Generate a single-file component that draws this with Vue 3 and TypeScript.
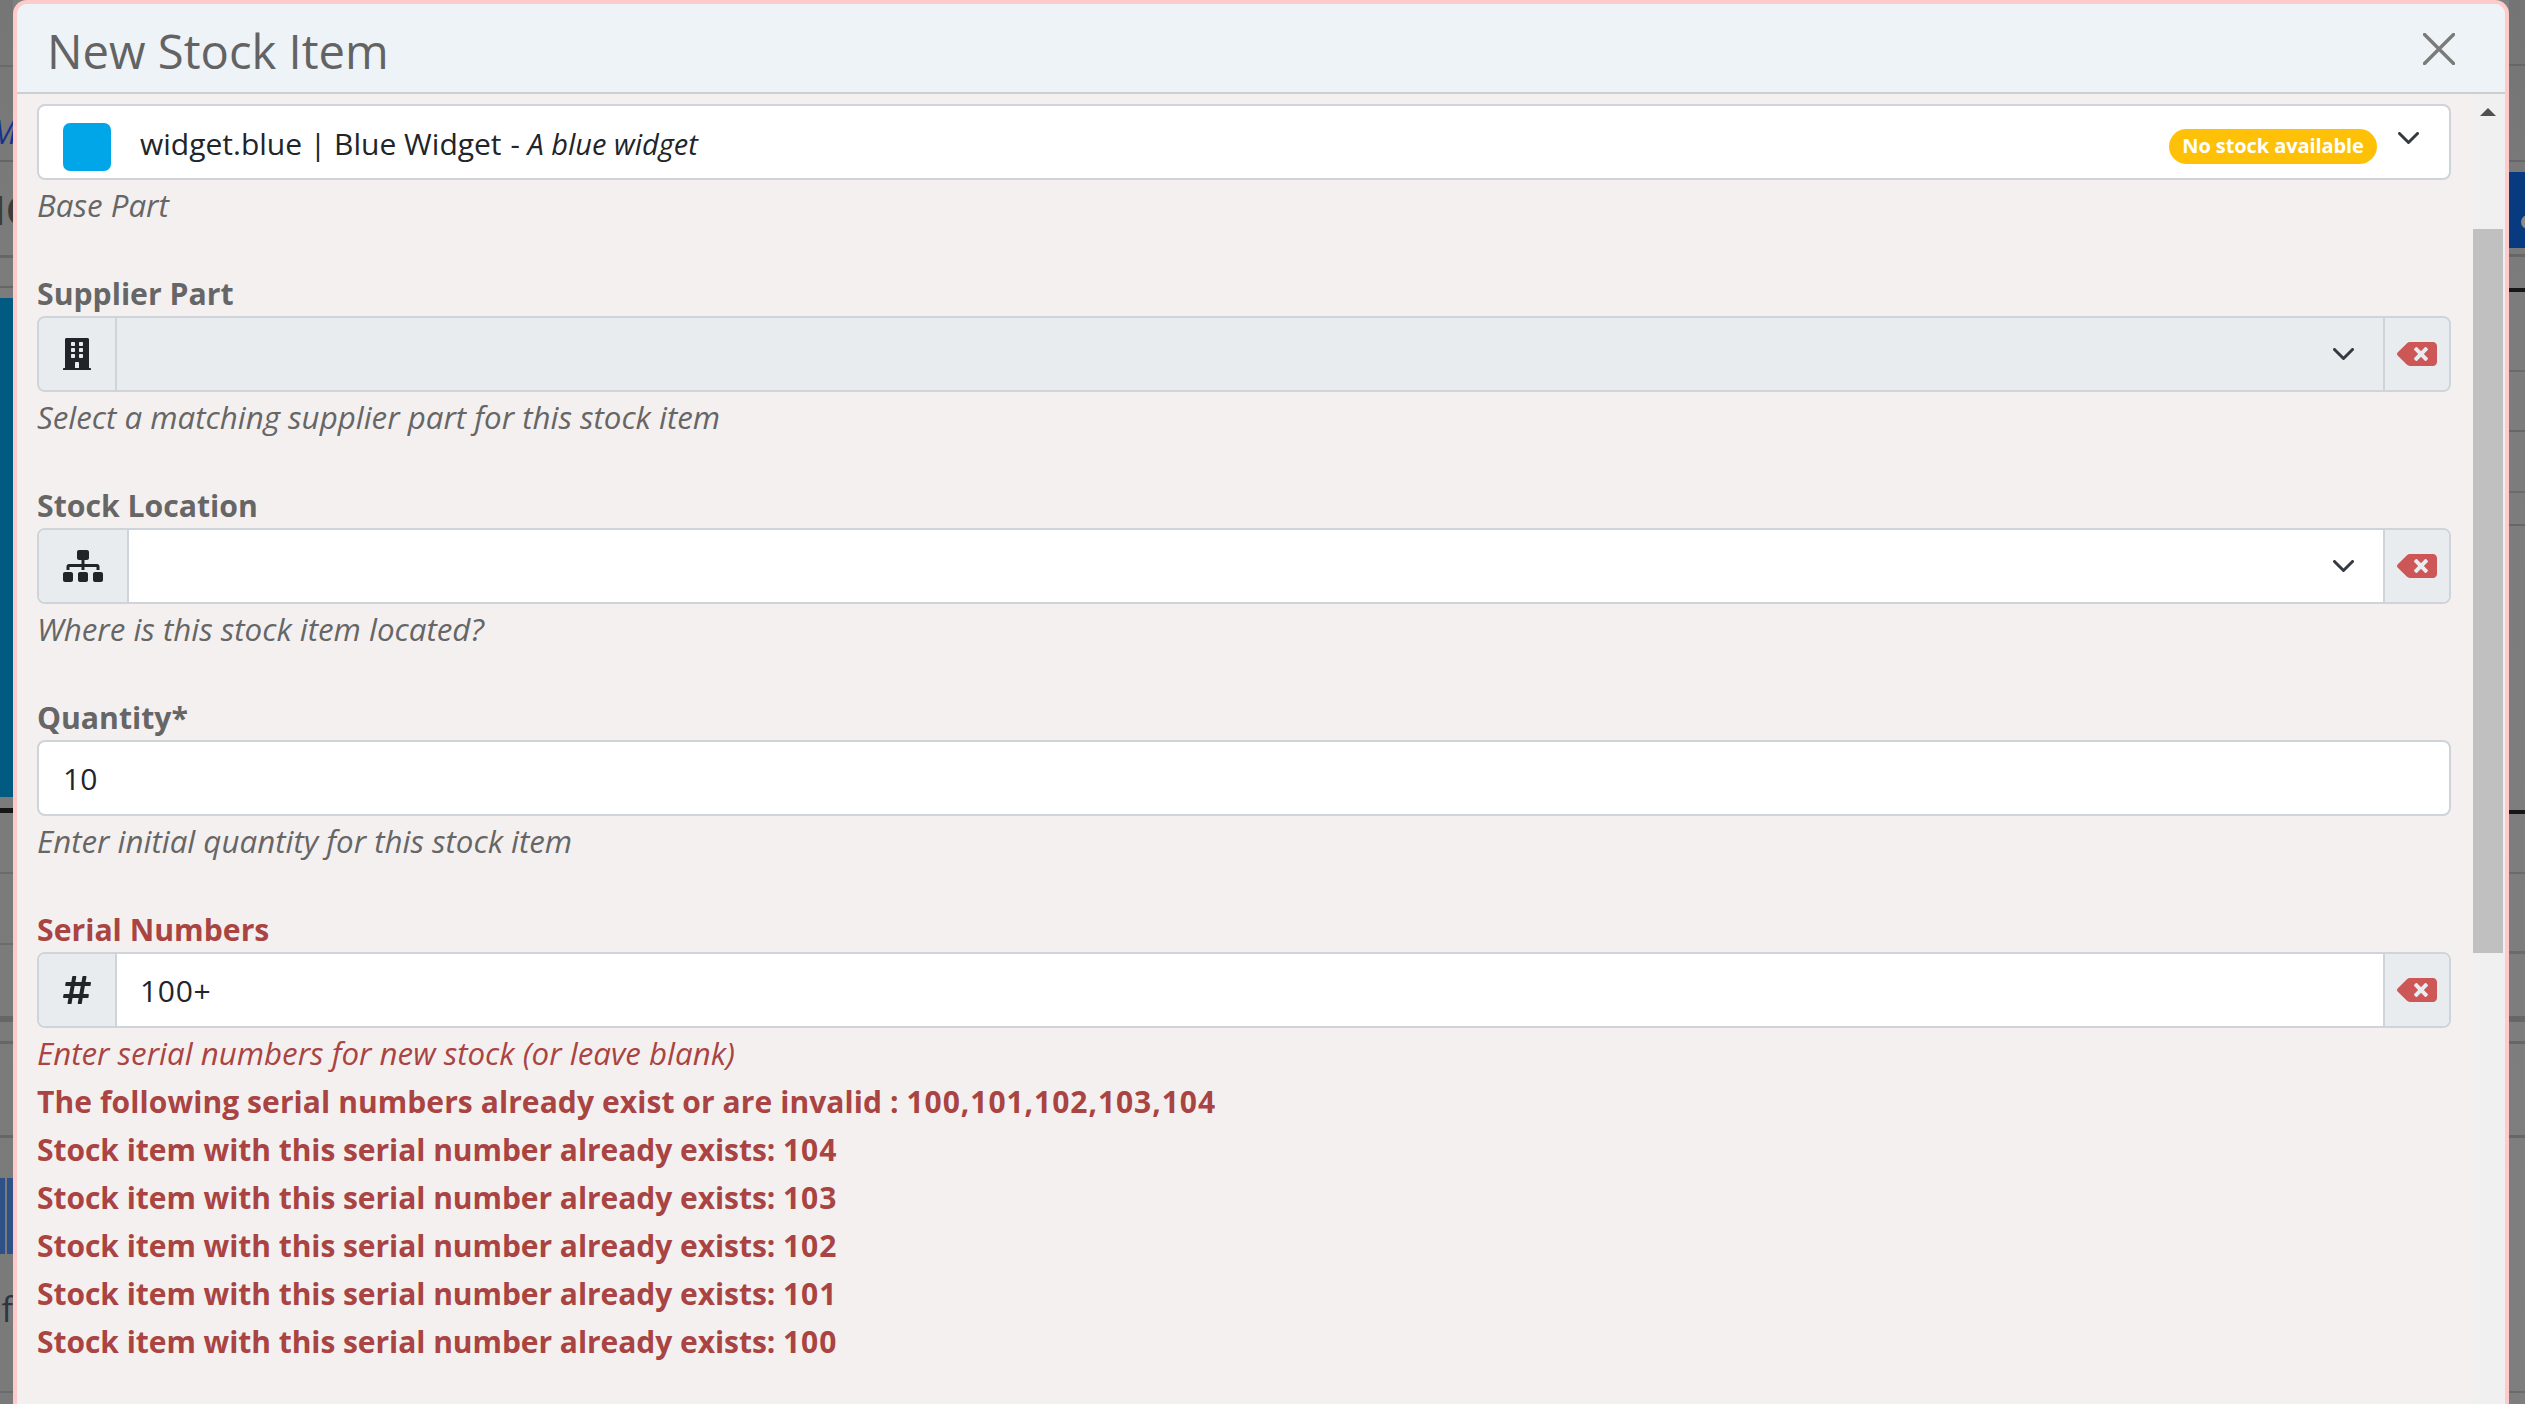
<script setup lang="ts">
interface Mark { y: number; h: number; c: string }
interface SerialError { text: string; nums: string; wide: boolean }
const leftMarks: Mark[] = [
  { y: 65, h: 2, c: '#6a6a6a' }, { y: 160, h: 2, c: '#656565' }, { y: 255, h: 3, c: '#666666' }, { y: 286, h: 2, c: '#666666' },
  { y: 298, h: 499, c: '#005a82' }, { y: 808, h: 5, c: '#161616' }, { y: 872, h: 2, c: '#6b6b6b' }, { y: 943, h: 2, c: '#6b6b6b' },
  { y: 1016, h: 6, c: '#666666' }, { y: 1041, h: 3, c: '#666666' }, { y: 1135, h: 3, c: '#666666' }, { y: 1391, h: 2, c: '#6b6b6b' },
]
const rightMarks: Mark[] = [
  { y: 64, h: 2, c: '#666666' }, { y: 160, h: 2, c: '#666666' }, { y: 172, h: 76, c: '#083a80' }, { y: 254, h: 3, c: '#666666' },
  { y: 288, h: 4, c: '#161616' }, { y: 370, h: 2, c: '#6b6b6b' }, { y: 430, h: 2, c: '#666666' }, { y: 491, h: 2, c: '#6b6b6b' },
  { y: 524, h: 2, c: '#666666' }, { y: 810, h: 4, c: '#161616' }, { y: 872, h: 2, c: '#6b6b6b' }, { y: 951, h: 3, c: '#6b6b6b' },
  { y: 1016, h: 6, c: '#666666' }, { y: 1041, h: 3, c: '#666666' }, { y: 1135, h: 3, c: '#666666' }, { y: 1391, h: 2, c: '#6b6b6b' },
]
const existing = 'Stock item with this serial number already exists: '
const serialErrors: SerialError[] = [
  { text: 'The following serial numbers already exist or are invalid : ', nums: '100,101,102,103,104', wide: true },
  { text: existing, nums: '104', wide: false },
  { text: existing, nums: '103', wide: false },
  { text: existing, nums: '102', wide: false },
  { text: existing, nums: '101', wide: false },
  { text: existing, nums: '100', wide: false },
]
const backspace = 'M576 64H205.26A63.97 63.97 0 0 0 160 82.75L9.37 233.37c-12.5 12.5-12.5 32.76 0 45.25L160 429.25c12 12 28.28 18.75 45.25 18.75H576c35.35 0 64-28.65 64-64V128c0-35.35-28.65-64-64-64zm-84.69 254.06c6.25 6.25 6.25 16.38 0 22.63l-22.62 22.62c-6.25 6.25-16.38 6.25-22.63 0L384 301.25l-62.06 62.06c-6.25 6.25-16.38 6.25-22.63 0l-22.62-22.62c-6.25-6.25-6.25-16.38 0-22.63L338.75 256l-62.06-62.06c-6.25-6.25-6.25-16.38 0-22.63l22.62-22.62c6.25-6.25 16.38-6.25 22.63 0L384 210.75l62.06-62.06c6.25-6.25 16.38-6.25 22.63 0l22.62 22.62c6.25 6.25 6.25 16.38 0 22.63L429.25 256l62.06 62.06z'
</script>

<template>
  <div class="page">
    <div class="strip strip-left">
      <i v-for="m in leftMarks" :key="m.y" class="mark" :style="{ top: m.y + 'px', height: m.h + 'px', background: m.c }"></i>
      <i class="block b1"></i><i class="block b2"></i>
      <span class="bg-text t-m">M</span>
      <span class="bg-text t-ic">IC</span>
      <span class="bg-text t-of">of</span>
    </div>
    <div class="strip strip-right">
      <i v-for="m in rightMarks" :key="m.y" class="mark" :style="{ top: m.y + 'px', height: m.h + 'px', background: m.c }"></i>
      <i class="blob"></i>
    </div>

    <div class="modal">
      <header class="modal-header">
        <h3 class="title">New Stock Item</h3>
        <svg class="close" viewBox="0 0 32 32" aria-label="Close"><path d="M1.5 1.5l29 29M30.5 1.5l-29 29" /></svg>
      </header>
      <div class="modal-body">
        <form class="form">
          <section class="field first">
            <div class="control part-select">
              <span class="swatch"></span>
              <span class="part-name">widget.blue | Blue Widget</span>
              <span class="part-desc">- <em>A blue widget</em></span>
              <span class="badge">No stock available</span>
              <svg class="chev chev-part" viewBox="0 0 21 12"><path d="M1.5 1.5L10.5 10.5 19.5 1.5" /></svg>
            </div>
            <p class="help">Base Part</p>
          </section>

          <section class="field">
            <label class="label">Supplier Part</label>
            <div class="control disabled">
              <span class="addon addon-narrow">
                <svg class="ico-building" viewBox="0 0 448 512"><path d="M436 480h-20V24c0-13.255-10.745-24-24-24H56C42.745 0 32 10.745 32 24v456H12c-6.627 0-12 5.373-12 12v20h448v-20c0-6.627-5.373-12-12-12zM128 76c0-6.627 5.373-12 12-12h40c6.627 0 12 5.373 12 12v40c0 6.627-5.373 12-12 12h-40c-6.627 0-12-5.373-12-12V76zm0 96c0-6.627 5.373-12 12-12h40c6.627 0 12 5.373 12 12v40c0 6.627-5.373 12-12 12h-40c-6.627 0-12-5.373-12-12v-40zm52 148h-40c-6.627 0-12-5.373-12-12v-40c0-6.627 5.373-12 12-12h40c6.627 0 12 5.373 12 12v40c0 6.627-5.373 12-12 12zm76 160h-64v-84c0-6.627 5.373-12 12-12h40c6.627 0 12 5.373 12 12v84zm64-172c0 6.627-5.373 12-12 12h-40c-6.627 0-12-5.373-12-12v-40c0-6.627 5.373-12 12-12h40c6.627 0 12 5.373 12 12v40zm0-96c0 6.627-5.373 12-12 12h-40c-6.627 0-12-5.373-12-12v-40c0-6.627 5.373-12 12-12h40c6.627 0 12 5.373 12 12v40zm0-96c0 6.627-5.373 12-12 12h-40c-6.627 0-12-5.373-12-12V76c0-6.627 5.373-12 12-12h40c6.627 0 12 5.373 12 12v40z" /></svg>
              </span>
              <span class="value"></span>
              <svg class="chev" viewBox="0 0 21 12"><path d="M1.5 1.5L10.5 10.5 19.5 1.5" /></svg>
              <span class="addon addon-clear"><svg class="ico-clear" viewBox="0 0 640 512"><path :d="backspace" /></svg></span>
            </div>
            <p class="help">Select a matching supplier part for this stock item</p>
          </section>

          <section class="field">
            <label class="label">Stock Location</label>
            <div class="control">
              <span class="addon addon-wide">
                <svg class="ico-sitemap" viewBox="0 0 640 512"><path d="M128 352H32c-17.67 0-32 14.33-32 32v96c0 17.67 14.33 32 32 32h96c17.67 0 32-14.33 32-32v-96c0-17.67-14.33-32-32-32zm-24-80h192v48h48v-48h192v48h48v-57.59c0-21.17-17.23-38.41-38.41-38.41H344v-64h40c17.67 0 32-14.33 32-32V32c0-17.67-14.33-32-32-32H256c-17.67 0-32 14.33-32 32v96c0 17.67 14.33 32 32 32h40v64H94.41C73.23 224 56 241.23 56 262.41V320h48v-48zm264 80h-96c-17.67 0-32 14.33-32 32v96c0 17.67 14.33 32 32 32h96c17.67 0 32-14.33 32-32v-96c0-17.67-14.33-32-32-32zm240 0h-96c-17.67 0-32 14.33-32 32v96c0 17.67 14.33 32 32 32h96c17.67 0 32-14.33 32-32v-96c0-17.67-14.33-32-32-32z" /></svg>
              </span>
              <span class="value"></span>
              <svg class="chev" viewBox="0 0 21 12"><path d="M1.5 1.5L10.5 10.5 19.5 1.5" /></svg>
              <span class="addon addon-clear"><svg class="ico-clear" viewBox="0 0 640 512"><path :d="backspace" /></svg></span>
            </div>
            <p class="help">Where is this stock item located?</p>
          </section>

          <section class="field">
            <label class="label">Quantity*</label>
            <div class="control">
              <span class="value value-plain">10</span>
            </div>
            <p class="help">Enter initial quantity for this stock item</p>
          </section>

          <section class="field invalid">
            <label class="label">Serial Numbers</label>
            <div class="control">
              <span class="addon addon-narrow">
                <svg class="ico-hash" viewBox="0 0 448 512"><path d="M440.667 182.109l7.143-40C449.121 134.764 443.468 128 436 128h-74.801l14.623-81.891C377.133 38.764 371.48 32 364.012 32h-40.631a12 12 0 0 0-11.813 9.891L296.175 128H197.801l14.623-81.891C213.735 38.764 208.082 32 200.614 32h-40.631a12 12 0 0 0-11.813 9.891L132.777 128H53.854a12 12 0 0 0-11.813 9.891l-7.143 40C33.587 185.236 39.24 192 46.708 192h74.801L98.652 320H19.73a12 12 0 0 0-11.813 9.891l-7.143 40C-.536 377.236 5.117 384 12.585 384h74.801L72.763 465.891C71.452 473.236 77.105 480 84.573 480h40.631a12 12 0 0 0 11.813-9.891L152.412 384h98.375l-14.623 81.891C234.853 473.236 240.506 480 247.974 480h40.631a12 12 0 0 0 11.813-9.891L315.81 384h78.922a12 12 0 0 0 11.813-9.891l7.143-40C415 326.764 409.347 320 401.879 320h-74.801l22.857-128h78.923a12 12 0 0 0 11.809-9.891zM261.449 320h-98.375l22.857-128h98.375l-22.857 128z" /></svg>
              </span>
              <span class="value serial-value">100+</span>
              <span class="addon addon-clear"><svg class="ico-clear" viewBox="0 0 640 512"><path :d="backspace" /></svg></span>
            </div>
            <p class="help">Enter serial numbers for new stock (or leave blank)</p>
            <p v-for="(e, i) in serialErrors" :key="i" class="err" :class="{ wide: e.wide }">{{ e.text }}<span class="nums">{{ e.nums }}</span></p>
          </section>
        </form>
        <aside class="scrollbar">
          <i class="arrow"></i>
          <i class="thumb"></i>
        </aside>
      </div>
    </div>
  </div>
</template>

<style>
html, body { margin: 0; background: #808080; overflow: hidden; }
</style>

<style scoped>
.page {
  position: relative;
  box-sizing: border-box;
  width: 2525px;
  height: 1404px;
  padding: 0 16px 0 13px;
  overflow: hidden;
  background: #808080;
  font-family: "Open Sans", "Noto Sans", sans-serif;
  font-size: 30px;
  line-height: 48px;
  color: #212529;
}
.strip { position: absolute; top: 0; bottom: 0; overflow: hidden; }
.strip-left { left: 0; width: 13px; background: linear-gradient(#767676, #7c7c7c 300px, #7a7a7a); }
.strip-right { right: 0; width: 16px; background: linear-gradient(#747474, #7c7c7c 300px, #7e7e7e); }
.mark { position: absolute; left: 0; right: 0; display: block; }
.block { position: absolute; top: 1178px; height: 76px; display: block; background: #2e5288; }
.b1 { left: 0; width: 5px; }
.b2 { left: 7px; width: 6px; }
.bg-text { position: absolute; white-space: nowrap; }
.t-m { top: 108px; right: -4px; color: #16338c; font-size: 32px; font-style: italic; }
.t-ic { top: 186px; right: -18px; color: #3c3c3c; font-size: 40px; font-weight: 600; }
.t-of { top: 1285px; right: 0; color: #33333f; font-size: 34px; }
.blob { position: absolute; left: 12px; top: 215px; width: 16px; height: 14px; border-radius: 8px; background: #8a8a8a; display: block; }

.modal {
  position: relative;
  box-sizing: border-box;
  height: 1404px;
  display: flex;
  flex-direction: column;
  border: 4px solid #ffcaca;
  border-bottom: 0;
  border-radius: 14px 14px 0 0;
  background: #f4f0f0;
  overflow: hidden;
}
.modal-header {
  box-sizing: border-box;
  flex: none;
  height: 90px;
  display: flex;
  align-items: center;
  justify-content: space-between;
  padding: 0 50px 0 30px;
  background: #eef3f7;
  border-bottom: 2px solid #cbcfd2;
}
.title { margin: 5px 0 0; font-size: 47.2px; font-weight: 400; line-height: 72px; color: #636363; }
.close { width: 32px; height: 32px; margin-top: 2px; fill: none; stroke: #7a7a7a; stroke-width: 3.4; stroke-linecap: round; }
.modal-body { flex: 1; display: flex; min-height: 0; }
.form { flex: 1; min-width: 0; padding: 10px 22px 0 20px; }
.field { margin-bottom: 40px; }
.label { display: block; padding-top: 4px; line-height: 44px; font-size: 30.2px; font-weight: 700; color: #666666; }
.control {
  box-sizing: border-box;
  height: 76px;
  display: flex;
  align-items: center;
  background: #fff;
  border: 2px solid #ced4da;
  border-radius: 8px;
  overflow: hidden;
}
.control.disabled { background: #e9ecef; }
.addon {
  box-sizing: border-box;
  flex: none;
  align-self: stretch;
  display: flex;
  align-items: center;
  background: #e9ecef;
}
.addon-narrow { width: 78px; padding-left: 24px; border-right: 2px solid #ced4da; }
.addon-wide { width: 90px; padding-left: 24px; border-right: 2px solid #ced4da; }
.addon-clear { width: 66px; padding-left: 12px; border-left: 2px solid #ced4da; margin-left: 29px; }
.ico-building { width: 28px; height: 32px; fill: #212529; }
.ico-sitemap { width: 40px; height: 32px; fill: #212529; }
.ico-hash { width: 28px; height: 32px; fill: #212529; }
.ico-clear { width: 40px; height: 32px; fill: #cd5656; }
.value { flex: 1; padding: 2px 0 0 24px; }
.serial-value { padding-left: 23px; letter-spacing: 0.7px; }
.chev { flex: none; width: 21px; height: 12px; fill: none; stroke: #343a40; stroke-width: 3; stroke-linecap: round; stroke-linejoin: round; }
.part-select { padding: 0 30px 0 24px; }
.swatch { flex: none; width: 48px; height: 48px; border-radius: 7px; background: #00a6e8; margin: 10px 29px 0 0; }
.part-name { margin: 3px 9px 0 0; }
.part-desc { flex: 1; margin-top: 3px; font-size: 29px; }
.badge {
  flex: none;
  box-sizing: border-box;
  width: 208px;
  height: 35px;
  margin: 9px 21px 0 0;
  text-align: center;
  border-radius: 18px;
  background: #ffc107;
  color: #fff;
  font-size: 20px;
  font-weight: 700;
  letter-spacing: -0.1px;
  line-height: 34px;
}
.chev-part { margin-top: -8px; }
.help { margin: 0; padding-top: 2px; line-height: 46px; font-size: 31.3px; font-style: italic; color: #666666; }
.invalid .label, .invalid .help, .err { color: #a94442; }
.err { margin: 0; padding-top: 4px; line-height: 44px; font-weight: 700; letter-spacing: -0.05px; }
.err.wide { letter-spacing: 0.08px; }
.nums { letter-spacing: 0.95px; }
.scrollbar {
  position: relative;
  box-sizing: border-box;
  flex: none;
  width: 32px;
  background: #f0f0f0;
  padding-right: 2px;
}
.arrow {
  display: block;
  width: 0;
  margin: 14px 0 0 7px;
  border: solid transparent;
  border-width: 0 8px 8px;
  border-bottom-color: #505050;
}
.thumb { display: block; margin-top: 113px; height: 724px; background: #c0c0c0; }
</style>
